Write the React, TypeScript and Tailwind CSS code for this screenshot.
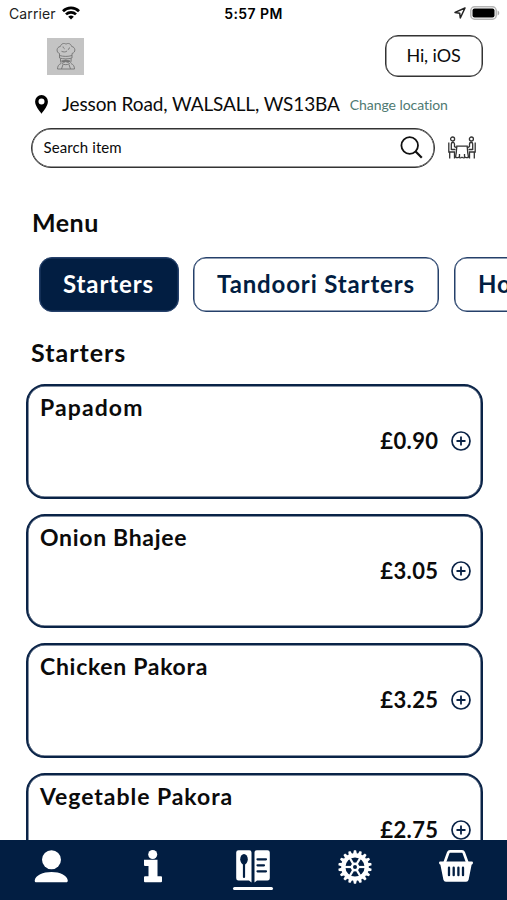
import React, { useState } from 'react';

interface MenuItem {
  name: string;
  price: string;
  tracking: string;
}

const categories = [
  { label: 'Starters', width: 'w-[140px]', tracking: 'tracking-[0.9px]' },
  { label: 'Tandoori Starters', width: 'w-[246px]', tracking: 'tracking-[0.85px]' },
  { label: 'House Specials', width: 'w-[222px]', tracking: 'tracking-[0.9px]' },
];

const items: MenuItem[] = [
  { name: 'Papadom', price: '£0.90', tracking: 'tracking-[1.1px]' },
  { name: 'Onion Bhajee', price: '£3.05', tracking: 'tracking-[0.68px]' },
  { name: 'Chicken Pakora', price: '£3.25', tracking: 'tracking-[0.7px]' },
  { name: 'Vegetable Pakora', price: '£2.75', tracking: 'tracking-[0.95px]' },
];

const StatusBar = () => (
  <div className="flex h-[26px] shrink-0 items-center justify-between pl-[9px] pr-[7px] font-['Inter',sans-serif] text-black">
    <div className="flex w-40 items-center gap-[6px]">
      <span className="text-[14px] tracking-[0.1px] text-[#222]">Carrier</span>
      <svg width="18" height="14" viewBox="0 0 18 14" fill="none" stroke="#000" strokeWidth="2.7">
        <path d="M1 5.2a11.3 11.3 0 0 1 16 0" />
        <path d="M4 8.4a7.1 7.1 0 0 1 10 0" />
        <path d="M9 13.6 6.2 10.8a4 4 0 0 1 5.6 0z" fill="#000" stroke="none" />
      </svg>
    </div>
    <span className="text-[14px] font-semibold tracking-[0.4px]">5:57 PM</span>
    <div className="flex w-[162px] items-center justify-end gap-[4px]">
      <svg width="12" height="12" viewBox="0 0 12 12" fill="none" stroke="#222" strokeWidth="1.5" strokeLinejoin="round">
        <path d="M11 1 1 5.4l4.7.8.6 4.8z" />
      </svg>
      <svg width="30" height="14" viewBox="0 0 30 14">
        <rect x="0.8" y="0.8" width="25.4" height="12.4" rx="3.8" fill="#fff" stroke="#b5b5b5" strokeWidth="1.5" />
        <rect x="2.5" y="2.5" width="22" height="9" rx="2" fill="#000" />
        <path d="M27.6 4.5c2.2.8 2.2 4.2 0 5z" fill="#aaa" />
      </svg>
    </div>
  </div>
);

const ChefLogo = () => (
  <svg width="37" height="37" viewBox="0 0 37 37" fill="none" stroke="#747474" strokeWidth="0.9">
    <rect width="37" height="37" fill="#c4c4c4" stroke="none" />
    <path d="M12.500 20v-4.500c-3.500-1-3.200-6.500.8-7 .8-3 4-3.800 5.700-2.300 2-1.500 4.800-.7 5.700 2.300 4 .5 4.300 6 .3 7V20" />
    <path d="M12.500 17.500c4 1.200 8.500 1.200 12.500 0M12.500 20c4 1.200 8.500 1.200 12.500 0M14.500 13.300c2 .9 4 .9 5.500-.3M16 8.500c.2 1.300.8 2 1.700 2.300M22.500 9.500c-.2 1.200-.8 2-1.700 2.300" />
    <path d="M13.500 20.500v2.500c0 2 2.500 3.700 5.300 3.700s5.300-1.700 5.300-3.700v-2.500" />
    <path d="M14.500 23c1.800 0 2.600-.8 4.300-1 1.700.2 2.500 1 4.300 1-1 1.600-3.200 1.500-4.300.5-1.100 1-3.300 1.100-4.300-.5z" fill="#777" />
    <path d="M14 25.500c-2.500 1-3.500 3-3.500 5.500h17c0-2.500-1-4.500-3.500-5.500M16 26.500 14.500 31M22 26.500l1.500 4.500" />
  </svg>
);

const PinIcon = () => (
  <svg width="13" height="19" viewBox="0 0 13 19">
    <path
      fillRule="evenodd"
      fill="#000"
      d="M6.500 0a6.400 6.400 0 0 0-6.400 6.500C.1 11 4 15 6.500 18.800 9 15 12.900 11 12.900 6.500A6.400 6.400 0 0 0 6.500 0zm0 3.600a3 3 0 1 1 0 6 3 3 0 0 1 0-6z"
    />
  </svg>
);

const SearchIcon = () => (
  <svg width="23" height="23" viewBox="0 0 23 23" fill="none" stroke="#111" strokeWidth="1.8">
    <circle cx="9.700" cy="9.500" r="8.300" />
    <path d="m15.600 15.500 6.200 6.300" strokeWidth="2.200" />
  </svg>
);

// Two diners sitting at a table
const DineInIcon = () => (
  <svg width="28" height="24" viewBox="0 0 28 24" fill="none" stroke="#333" strokeWidth="1.300">
    <circle cx="4.600" cy="3" r="2" />
    <circle cx="23.400" cy="3" r="2" />
    <path d="M.8 6.500V16h5.700v6.500M1.700 16v6.500M3.300 14V8.500c0-3 3.200-3 3.200 0v2l2.500 1.300M3.300 13.500h4.200" />
    <path d="M27.200 6.500V16h-5.700v6.500M26.300 16v6.500M24.700 14V8.500c0-3-3.200-3-3.200 0v2L19 11.800M24.700 13.500h-4.200" />
    <path d="M8.800 10.200h10.400c.2 4 .6 8 1.300 11-1.200.6-2.200.6-3.200 0-1 .9-2 .9-3.300 0-1.300.9-2.300.9-3.300 0-1 .6-2 .6-3.200 0 .7-3 1.100-7 1.300-11zM11.500 18v3M16.500 18v3" />
  </svg>
);

const PlusIcon = () => (
  <svg width="20" height="20" viewBox="0 0 20 20" fill="none" stroke="#0a2347">
    <circle cx="10" cy="10" r="9" strokeWidth="1.700" />
    <path d="M10 5.500v9M5.500 10h9" strokeWidth="1.800" />
  </svg>
);

const PersonIcon = () => (
  <svg width="34" height="34" viewBox="0 0 34 34" fill="#fff">
    <circle cx="17.500" cy="9.700" r="9.500" />
    <path d="M.8 30C1.800 25.500 8.800 22 17.500 22s15.200 3.500 16.200 8c.3 1.500-.3 2.300-1.700 2.300H2.500c-1.400 0-2-.8-1.700-2.300z" />
  </svg>
);

const InfoIcon = () => (
  <svg width="34" height="34" viewBox="0 0 34 34" fill="#fff">
    <circle cx="17.700" cy="4.500" r="4.500" />
    <path d="M9 9.700h13.500v16.500H26a1 1 0 0 1 1 1v4a1 1 0 0 1-1 1H10a1 1 0 0 1-1-1v-4a1 1 0 0 1 1-1h3.500V16H10a1 1 0 0 1-1-1z" />
  </svg>
);

const MenuBookIcon = () => (
  <svg width="34" height="34" viewBox="0 0 34 34" fill="#fff">
    <path d="M2.500.2h10.800q2.200 0 2.200 2.200v30l-2.500-1.800H2.500Q.2 30.600.2 28.300V2.500Q.2.200 2.500.2z" />
    <path d="M20.700.2h10.800q2.300 0 2.300 2.300v25.800q0 2.300-2.300 2.300H21l-2.500 1.800v-30Q18.500.2 20.700.2z" />
    <ellipse cx="8" cy="9.200" rx="3.800" ry="5.300" fill="#021e42" />
    <path d="M8 13v14M21.500 9.300h8.500M21.500 15.300h6.500M21.500 21.300h8.500" fill="none" stroke="#021e42" strokeWidth="2.200" strokeLinecap="round" />
  </svg>
);

const spokes = [0, 60, 120, 180, 240, 300];
const teeth = Array.from({ length: 18 }, (_, i) => i * 20);

const GearIcon = () => (
  <svg width="34" height="34" viewBox="-17 -17 34 34" fill="none" stroke="#fff">
    <circle r="11.700" strokeWidth="4.200" />
    {teeth.map((angle) => (
      <path key={angle} d="M-1.900-13h3.800l-.8-3.700h-2.200z" transform={`rotate(${angle})`} fill="#fff" stroke="none" />
    ))}
    {spokes.map((angle) => (
      <path key={angle} d="M3 0h8" strokeWidth="2.200" transform={`rotate(${angle})`} />
    ))}
    <circle r="3.200" strokeWidth="2.400" />
  </svg>
);

const BasketIcon = () => (
  <svg width="34" height="34" viewBox="0 0 34 34">
    <path d="M5.500 13 9.300 2.600Q9.800 1.400 11 1.400h12q1.200 0 1.700 1.200L28.500 13" fill="none" stroke="#fff" strokeWidth="2.700" />
    <path d="M1.200 11.500h31.600q1.200 0 1.200 1.300 0 1.400-1.400 1.900L29.600 29.700q-.5 2.100-2.500 2.100H6.900q-2 0-2.500-2.100L1.400 14.700Q0 14.200 0 12.800q0-1.300 1.200-1.300z" fill="#fff" />
    <path d="M10 17.700v7.500M14.700 17.700v7.500M19.400 17.700v7.500M24 17.700v7.500" stroke="#021e42" strokeWidth="2.300" strokeLinecap="round" />
  </svg>
);

const tabs = [
  { id: 'profile', icon: <PersonIcon /> },
  { id: 'info', icon: <InfoIcon /> },
  { id: 'menu', icon: <MenuBookIcon /> },
  { id: 'settings', icon: <GearIcon /> },
  { id: 'basket', icon: <BasketIcon /> },
];

const ItemCard: React.FC<{ item: MenuItem }> = ({ item }) => (
  <div className="flex h-[114.5px] shrink-0 flex-col rounded-[19px] border-2 border-[#0a2347] pl-[12.5px] pr-[10px] pt-[7px] shadow-[inset_0_0_0_0.5px_#0a2347]">
    <h3 className={`text-[23px] font-bold leading-[28px] ${item.tracking}`}>{item.name}</h3>
    <div className="mt-[6px] flex items-center justify-end gap-3">
      <span className="text-[22px] font-bold leading-7 tracking-[0.4px]">{item.price}</span>
      <button type="button">
        <PlusIcon />
      </button>
    </div>
  </div>
);

const App: React.FC = () => {
  const [category, setCategory] = useState('Starters');
  const [tab, setTab] = useState('menu');

  return (
    <div className="flex h-[900px] w-[507px] flex-col overflow-hidden bg-white font-['Lato',sans-serif] text-[#0b0b0b]">
      <StatusBar />

      {/* Header */}
      <header className="mt-[9px] flex h-[42px] shrink-0 items-center justify-between pl-[46.500px] pr-[24.500px]">
        <ChefLogo />
        <button type="button" className="h-[42px] w-[98px] rounded-[13px] border border-[#333] pb-px text-[18px] tracking-[-0.1px] shadow-[inset_0_0_0_0.5px_#333]">
          Hi, iOS
        </button>
      </header>

      <div className="mt-[14px] flex h-[27px] shrink-0 items-center pl-[35px]">
        <PinIcon />
        <span className="ml-[14px] whitespace-nowrap text-[19px] tracking-[-0.12px]">Jesson Road, WALSALL, WS13BA</span>
        <span className="ml-[10px] whitespace-nowrap text-[14px] tracking-[-0.07px] text-[#4f7a72]">Change location</span>
      </div>

      <div className="mt-[9.500px] flex h-10 shrink-0 items-center gap-[13px] pl-[31px]">
        <div className="flex h-10 w-[404px] items-center justify-between rounded-full border border-[#333] pl-[11.500px] pr-[11px] shadow-[inset_0_0_0_0.5px_#333]">
          <span className="text-[15px] tracking-[0.1px]">Search item</span>
          <SearchIcon />
        </div>
        <DineInIcon />
      </div>

      <h2 className="ml-8 mt-[38.500px] h-8 shrink-0 text-[25px] font-bold leading-8 tracking-[0.5px]">Menu</h2>

      {/* Categories */}
      <div className="mt-[18.500px] flex shrink-0 gap-[14.500px] overflow-hidden pl-[38.500px]">
        {categories.map(({ label, width, tracking }) => (
          <button
            key={label}
            type="button"
            onClick={() => setCategory(label)}
            className={`h-[55px] shrink-0 whitespace-nowrap rounded-[13px] border border-[#25406a] text-[24px] font-bold shadow-[inset_0_0_0_0.5px_#25406a] ${width} ${tracking} ${
              category === label ? 'bg-[#021e42] text-white' : 'bg-white text-[#021e42]'
            }`}
          >
            {label}
          </button>
        ))}
      </div>

      <h2 className="ml-[31px] mt-[24px] h-8 shrink-0 text-[25px] font-bold leading-8 tracking-[1px]">Starters</h2>

      <main className="mt-[16.500px] flex min-h-0 flex-1 flex-col gap-[15px] overflow-hidden pl-[25.5px] pr-[24.5px]">
        {items.map((item) => (
          <ItemCard key={item.name} item={item} />
        ))}
      </main>

      {/* Bottom navigation */}
      <nav className="grid h-[60px] shrink-0 grid-cols-5 bg-[#021e42]">
        {tabs.map(({ id, icon }) => (
          <button key={id} type="button" onClick={() => setTab(id)} className="flex flex-col items-center pt-[10px]">
            {icon}
            {tab === id && <span className="mt-[3px] h-[3px] w-10 rounded-full bg-white" />}
          </button>
        ))}
      </nav>
    </div>
  );
};

export default App;
